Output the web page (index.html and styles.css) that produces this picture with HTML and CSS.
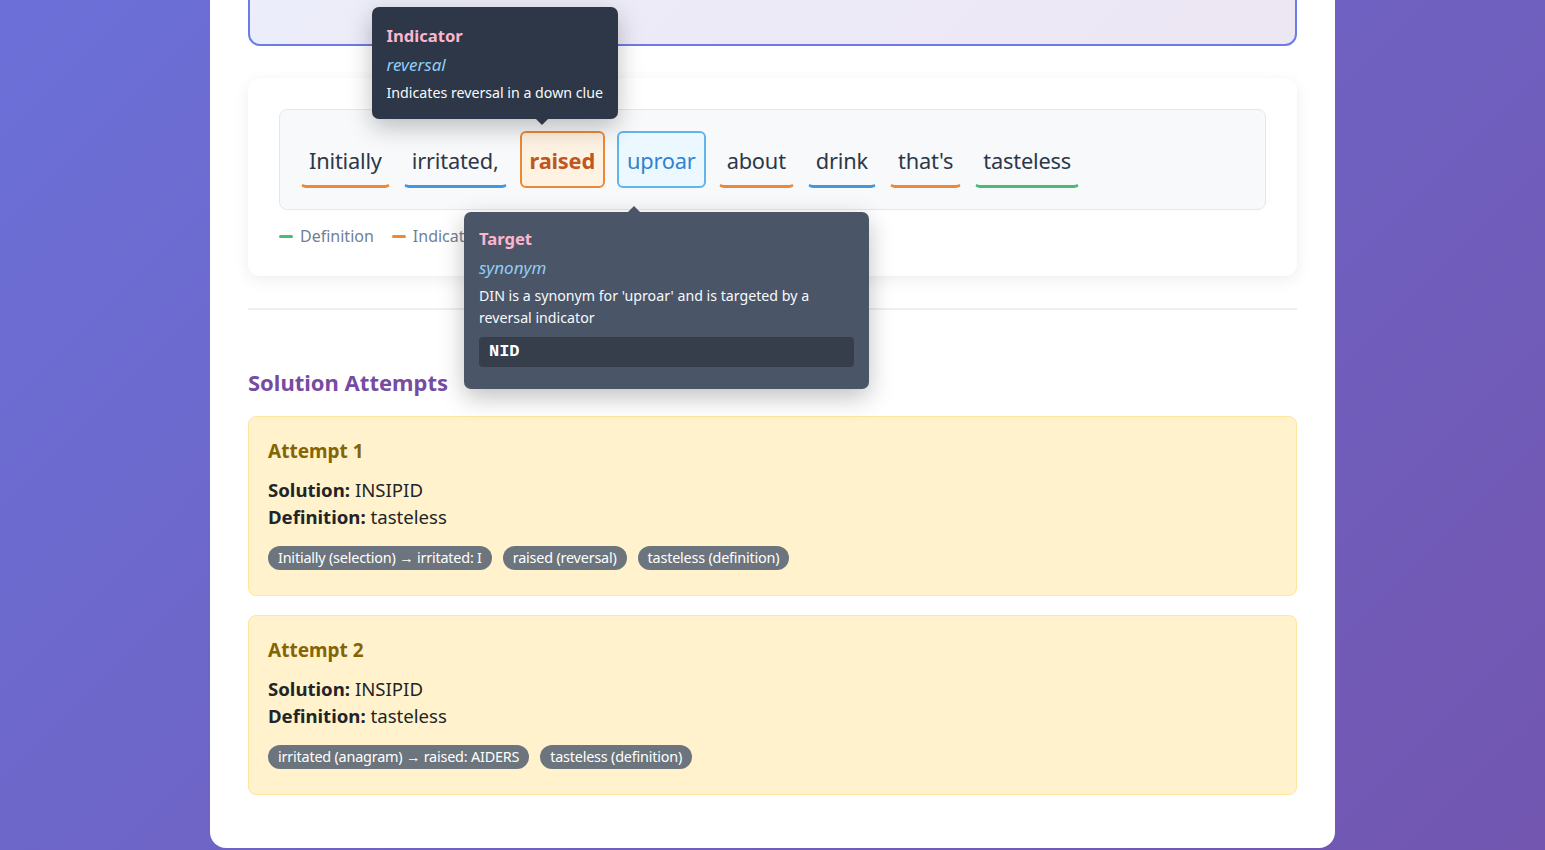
FILE: index.html
```html
<!DOCTYPE html>
<html lang="en">
<head>
<meta charset="utf-8">
<title>Cryptic Clue Analysis</title>
<link rel="stylesheet" href="styles.css">
</head>
<body>
<div class="container">
  <div class="clue-box"></div>

  <div class="card">
    <div class="clue-words">
      <span class="word u-ind">Initially</span>
      <span class="word u-tgt">irritated,</span>
      <span class="word active-ind">raised
        <div class="tip tip-dark">
          <div class="tip-title">Indicator</div>
          <div class="tip-sub">reversal</div>
          <div class="tip-desc">Indicates reversal in a down clue</div>
        </div>
      </span>
      <span class="word active-tgt">uproar
        <div class="tip tip-slate">
          <div class="tip-title">Target</div>
          <div class="tip-sub">synonym</div>
          <div class="tip-desc">DIN is a synonym for 'uproar' and is targeted by a reversal indicator</div>
          <div class="tip-code">NID</div>
        </div>
      </span>
      <span class="word u-ind">about</span>
      <span class="word u-tgt">drink</span>
      <span class="word u-ind">that's</span>
      <span class="word u-def">tasteless</span>
    </div>
    <div class="legend">
      <span class="legend-item"><span class="dash d-def"></span>Definition</span>
      <span class="legend-item"><span class="dash d-ind"></span>Indicator</span>
      <span class="legend-item"><span class="dash d-tgt"></span>Target</span>
    </div>
  </div>

  <hr class="divider">

  <h2 class="section-title">Solution Attempts</h2>

  <div class="attempt">
    <h3 class="attempt-title">Attempt 1</h3>
    <div class="attempt-line"><strong>Solution:</strong> INSIPID</div>
    <div class="attempt-line"><strong>Definition:</strong> tasteless</div>
    <div class="pills">
      <span class="pill">Initially (selection) → irritated: I</span>
      <span class="pill">raised (reversal)</span>
      <span class="pill">tasteless (definition)</span>
    </div>
  </div>

  <div class="attempt">
    <h3 class="attempt-title">Attempt 2</h3>
    <div class="attempt-line"><strong>Solution:</strong> INSIPID</div>
    <div class="attempt-line"><strong>Definition:</strong> tasteless</div>
    <div class="pills">
      <span class="pill">irritated (anagram) → raised: AIDERS</span>
      <span class="pill">tasteless (definition)</span>
    </div>
  </div>
</div>
</body>
</html>
```

FILE: styles.css
```css
* { box-sizing: border-box; }

html {
  height: 100%;
  background: linear-gradient(135deg, #6b70d8 0%, #7256b0 100%);
  background-attachment: fixed;
}

body {
  margin: 0;
  padding: 0 0 2px;
  font-family: "Noto Sans", "Open Sans", sans-serif;
  color: #2d3748;
  overflow: hidden;
}

.container {
  width: 1125px;
  margin: -120px auto 0;
  background: #ffffff;
  border-radius: 16px;
  padding: 38px 38px 53px;
}

.clue-box {
  height: 128px;
  border: 2px solid #6b7ce6;
  border-radius: 12px;
  background: linear-gradient(135deg, #eceefb 0%, #ede6f3 100%);
}

.card {
  margin-top: 32px;
  background: #ffffff;
  border-radius: 12px;
  box-shadow: 0 4px 16px rgba(0, 0, 0, 0.07);
  padding: 31px 31px 29px;
}

.clue-words {
  display: flex;
  flex-wrap: wrap;
  align-items: center;
  gap: 12px;
  background: #f7f9fb;
  border: 1px solid #e2e8f0;
  border-radius: 8px;
  padding: 21px 20px;
}

.word {
  position: relative;
  font-size: 21.8px;
  line-height: 36px;
  padding: 10px 7px 6px;
  border: 2px solid transparent;
  border-bottom-width: 3px;
  border-radius: 6px;
  color: #2d3748;
  letter-spacing: -0.2px;
}

.u-ind { border-bottom-color: #ed8936; }
.u-tgt { border-bottom-color: #4299e1; }
.u-def { border-bottom-color: #48bb78; }

.active-ind {
  border: 2px solid #ed8936;
  background: #fef3e2;
  color: #c05621;
  font-weight: 700;
  padding: 10px 8px 7px;
}

.active-tgt {
  border: 2px solid #63b3ed;
  background: #ebf8ff;
  color: #3182ce;
  padding: 10px 8px 7px;
}

.legend {
  display: flex;
  gap: 18px;
  margin-top: 15px;
  font-size: 16px;
  line-height: 22px;
  color: #718096;
}

.legend-item {
  display: flex;
  align-items: center;
  gap: 7px;
}

.dash {
  width: 14px;
  height: 3px;
  border-radius: 2px;
}
.d-def { background: #48bb78; }
.d-ind { background: #ed8936; }
.d-tgt { background: #4299e1; }

.tip {
  position: absolute;
  z-index: 10;
  border-radius: 7px;
  padding: 13px 15px 15px;
  color: #f7fafc;
  font-weight: 400;
  letter-spacing: 0;
  box-shadow: 0 8px 24px rgba(0, 0, 0, 0.25);
  text-align: left;
}

.tip::after {
  content: "";
  position: absolute;
  left: 164px;
  border: 6px solid transparent;
}

.tip-dark {
  background: #2d3748;
  width: max-content;
  white-space: nowrap;
  left: -150px;
  bottom: calc(100% + 14px);
  padding-top: 15px;
}
.tip-dark::after {
  top: 100%;
  border-top-color: #2d3748;
}

.tip-slate {
  background: #4a5568;
  width: 405px;
  left: -155px;
  top: calc(100% + 26px);
  padding-bottom: 22px;
}
.tip-slate::after {
  bottom: 100%;
  border-bottom-color: #4a5568;
}

.tip-title {
  color: #fbb6ce;
  font-weight: 700;
  font-size: 16.6px;
  line-height: 28px;
}

.tip-sub {
  color: #90cdf4;
  font-style: italic;
  font-size: 17px;
  line-height: 30px;
}

.tip-desc {
  font-size: 14.2px;
  line-height: 22px;
  margin-top: 2px;
  color: #f7fafc;
}

.tip-code {
  margin-top: 8px;
  background: #363d4b;
  border-radius: 4px;
  padding: 4px 10px;
  font-family: "Liberation Mono", monospace;
  font-weight: 700;
  font-size: 17px;
  line-height: 22px;
  color: #ffffff;
}

.divider {
  border: 0;
  height: 2px;
  background: #edf0f3;
  margin: 32px 0 0;
}

.section-title {
  margin: 57px 0 19px;
  font-size: 22px;
  line-height: 30px;
  font-weight: 700;
  color: #764ba2;
}

.attempt {
  background: #fff2cc;
  border: 1px solid #ffe69c;
  border-radius: 8px;
  padding: 19px 19px 25px;
  margin-bottom: 19px;
}
.attempt:last-child { margin-bottom: 0; }

.attempt-title {
  margin: 0 0 10px;
  font-size: 19px;
  line-height: 30px;
  font-weight: 700;
  color: #856404;
}

.attempt-line {
  font-size: 18.6px;
  line-height: 27px;
  color: #212529;
}

.attempt-line strong { font-weight: 700; }

.pills {
  display: flex;
  flex-wrap: wrap;
  gap: 11px;
  margin-top: 16px;
}

.pill {
  background: #6c757d;
  color: #ffffff;
  border-radius: 12px;
  padding: 0 10px;
  font-size: 14.4px;
  line-height: 24px;
  letter-spacing: -0.2px;
}
```
